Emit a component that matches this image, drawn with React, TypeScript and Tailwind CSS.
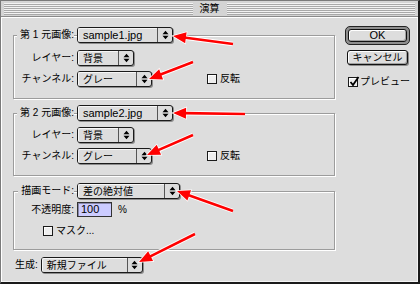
const ff = "font-['Liberation_Sans','Noto_Sans_CJK_JP',sans-serif]";
const stripes =
  "bg-[repeating-linear-gradient(to_bottom,#f2f2f2_0px,#f2f2f2_1px,#a9a9a9_1px,#a9a9a9_2px)]";

function UpDown() {
  return (
    <svg width="7" height="10" viewBox="0 0 7 10">
      <path d="M0.5 4.2 L3.5 0.8 L6.5 4.2 Z M0.5 5.8 L3.5 9.2 L6.5 5.8 Z" fill="#000" />
    </svg>
  );
}

function Popup({ text, className, latin }: { text: string; className: string; latin?: boolean }) {
  return (
    <div
      className={`flex h-[16px] shrink-0 rounded-[3px] border border-[#1a1a1a] bg-[#dddddd] shadow-[1px_1px_0_#8c8c8c] ${className}`}
    >
      <div
        className={`flex flex-1 items-center rounded-l-[2px] border-l border-t border-[#f6f6f6] pl-[4px] leading-none ${
          latin ? "text-[11px]" : "text-[10px]"
        }`}
      >
        {text}
      </div>
      <div className="flex w-[15px] items-center justify-center border-l border-[#555]">
        <UpDown />
      </div>
    </div>
  );
}

function Check({ checked }: { checked?: boolean }) {
  return (
    <span className="relative block h-[10px] w-[10px] shrink-0 border border-[#1a1a1a] bg-[#eeeeee] shadow-[inset_1px_1px_0_#fff]">
      {checked && (
        <svg className="absolute left-[0px] top-[-2px]" width="11" height="11" viewBox="0 0 11 11">
          <path d="M1.5 6 L4 9 L9.5 1" stroke="#000" strokeWidth="1.8" fill="none" />
        </svg>
      )}
    </span>
  );
}

function Label({ children, header }: { children: string; header?: boolean }) {
  return (
    <div className={`flex justify-end ${header ? "w-[61px]" : "w-[60px]"}`}>
      <span className="bg-[#dddddd] pl-[3px] text-[10px] leading-none">{children}</span>
    </div>
  );
}

function SourceGroup({ n, file, boxClass }: { n: string; file: string; boxClass: string }) {
  return (
    <div>
      <div className="relative z-10 flex h-[16px] items-center gap-[3px]">
        <Label header>{`第 ${n} 元画像:`}</Label>
        <Popup text={file} latin className="w-[96px]" />
      </div>
      <div
        className={`-mt-[8px] flex flex-col gap-[5px] border border-[#9c9c9c] shadow-[inset_1px_1px_0_#fff,1px_1px_0_#fff] ${boxClass}`}
      >
        <div className="flex h-[16px] items-center gap-[3px]">
          <Label>レイヤー:</Label>
          <Popup text="背景" className="w-[57px]" />
        </div>
        <div className="flex h-[16px] items-center gap-[3px]">
          <Label>チャンネル:</Label>
          <Popup text="グレー" className="w-[75px]" />
          <div className="ml-[52px] flex items-center gap-[3px]">
            <Check />
            <span className="text-[10px] leading-none">反転</span>
          </div>
        </div>
      </div>
    </div>
  );
}

const arrows: [number, number, number, number][] = [
  [233, 44, 173, 36],
  [193, 62, 149, 79],
  [245, 114, 173, 113],
  [193, 135, 147, 155],
  [233, 211, 177, 191],
  [195, 234, 139, 262],
];

function Arrows() {
  return (
    <svg className="pointer-events-none absolute left-[-1px] top-[-1px] z-20" width="420" height="284">
      {arrows.map(([x1, y1, x2, y2], i) => {
        const dx = x2 - x1;
        const dy = y2 - y1;
        const len = Math.hypot(dx, dy);
        const ux = dx / len;
        const uy = dy / len;
        const bx = x2 - ux * 13;
        const by = y2 - uy * 13;
        const pts = `${x2},${y2} ${bx - uy * 5.5},${by + ux * 5.5} ${bx + uy * 5.5},${by - ux * 5.5}`;
        return (
          <g key={i}>
            <line x1={x1} y1={y1} x2={bx} y2={by} stroke="#fff" strokeWidth="4.5" />
            <polygon points={pts} fill="#fff" stroke="#fff" strokeWidth="1.5" />
            <line x1={x1} y1={y1} x2={bx + ux * 2} y2={by + uy * 2} stroke="#ff0000" strokeWidth="2.6" />
            <polygon points={pts} fill="#ff0000" />
          </g>
        );
      })}
    </svg>
  );
}

export default function App() {
  return (
    <div
      className={`relative flex h-[284px] w-[420px] flex-col overflow-hidden border-l border-t border-[#7a7a7a] border-b-2 border-r-2 border-b-[#1a1a1a] border-r-[#1a1a1a] bg-[#dddddd] text-black ${ff}`}
    >
      <div className="flex h-[16px] shrink-0 items-center border-b border-[#8a8a8a] bg-[#d4d4d4] px-[3px]">
        <div className={`h-[12px] flex-1 ${stripes}`} />
        <span className="px-[7px] text-[10px] leading-none">演算</span>
        <div className={`h-[12px] flex-1 ${stripes}`} />
      </div>

      <div className="flex flex-1 border-l border-t border-white pl-[11px] pt-[9px] shadow-[inset_-1px_-1px_0_#f4f4f4]">
        <div className="flex w-[322px] flex-col">
          <SourceGroup n="1" file="sample1.jpg" boxClass="h-[64px] pt-[14px]" />
          <div className="mt-[6px]">
            <SourceGroup n="2" file="sample2.jpg" boxClass="h-[63px] pt-[13px]" />
          </div>

          <div className="mt-[7px]">
            <div className="relative z-10 flex h-[16px] items-center gap-[3px]">
              <Label header>描画モード:</Label>
              <Popup text="差の絶対値" className="w-[103px]" />
            </div>
            <div className="-mt-[8px] flex h-[59px] flex-col border border-[#9c9c9c] pt-[10px] shadow-[inset_1px_1px_0_#fff,1px_1px_0_#fff]">
              <div className="flex h-[15px] items-center gap-[3px]">
                <Label>不透明度:</Label>
                <div className="flex h-[15px] w-[35px] items-center border border-[#333] bg-[#ccccff] pl-[3px] text-[11px] leading-none shadow-[inset_1px_1px_0_#8888aa]">
                  100
                </div>
                <span className="ml-[3px] text-[10px] leading-none">%</span>
              </div>
              <div className="ml-[29px] mt-[8px] flex h-[12px] items-center gap-[3px]">
                <Check />
                <span className="text-[10px] leading-none">マスク...</span>
              </div>
            </div>
          </div>

          <div className="ml-[2px] mt-[7px] flex h-[16px] items-center gap-[3px]">
            <span className="text-[10px] leading-none">生成:</span>
            <Popup text="新規ファイル" className="w-[102px]" />
          </div>
        </div>

        <div className="-mt-[1px] ml-[10px] flex flex-col">
          <div className="flex h-[19px] w-[65px] rounded-[5px] border border-[#222] bg-[#8e8e8e] p-[2px]">
            <div className="flex flex-1 items-center justify-center rounded-[3px] border border-[#111] bg-[#dddddd] text-[11px] leading-none shadow-[inset_1px_1px_0_#fff,inset_-1px_-1px_0_#a0a0a0]">
              OK
            </div>
          </div>
          <div className="ml-[2px] mt-[5px] flex h-[15px] w-[61px] items-center justify-center rounded-[3px] border border-[#111] bg-[#dddddd] text-[10px] leading-none shadow-[inset_1px_1px_0_#fff,inset_-1px_-1px_0_#a0a0a0,1px_1px_0_#8c8c8c]">
            キャンセル
          </div>
          <div className="ml-[3px] mt-[11px] flex h-[12px] items-center gap-[2px]">
            <Check checked />
            <span className="text-[10px] leading-none">プレビュー</span>
          </div>
        </div>
      </div>

      <Arrows />
    </div>
  );
}
